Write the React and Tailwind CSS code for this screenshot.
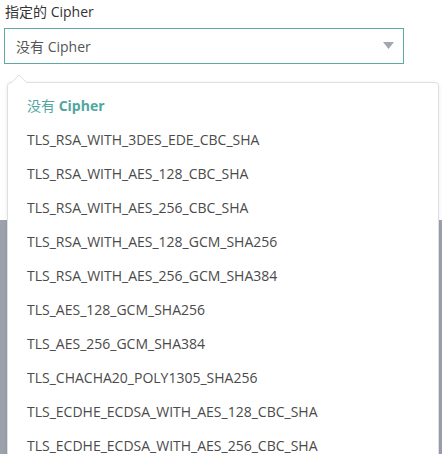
import React from 'react';

const CIPHERS = [
  'TLS_RSA_WITH_3DES_EDE_CBC_SHA',
  'TLS_RSA_WITH_AES_128_CBC_SHA',
  'TLS_RSA_WITH_AES_256_CBC_SHA',
  'TLS_RSA_WITH_AES_128_GCM_SHA256',
  'TLS_RSA_WITH_AES_256_GCM_SHA384',
  'TLS_AES_128_GCM_SHA256',
  'TLS_AES_256_GCM_SHA384',
  'TLS_CHACHA20_POLY1305_SHA256',
  'TLS_ECDHE_ECDSA_WITH_AES_128_CBC_SHA',
  'TLS_ECDHE_ECDSA_WITH_AES_256_CBC_SHA',
];

const App = () => {
  return (
    <div className="relative h-[454px] w-[442px] overflow-hidden font-['Open_Sans','Noto_Sans_CJK_SC',sans-serif] text-[14px]">
      <div className="h-[220px] bg-white px-[4px] pt-[2px]">
        <label className="block pl-[1px] text-[14px] leading-[20px] text-[#333]">指定的 Cipher</label>
        <div className="mt-[6px] flex h-[36px] w-[400px] items-center justify-between border border-[#5fa8a3] pl-[11px] pr-[9px] text-[14px] text-[#555]">
          <span>没有 Cipher</span>
          <svg width="11" height="8" viewBox="0 0 11 8">
            <path d="M0 0 H11 L5.5 7 Z" fill="#a3a7b2" />
          </svg>
        </div>
      </div>
      <div className="h-[234px] bg-[#9ca1ac]" />

      <div className="absolute left-[7px] top-[82px] w-[432px] rounded-[4px] border border-[#dcdfe4] bg-white shadow-[0_1px_4px_rgba(0,0,0,0.08)]">
        <svg className="absolute left-[3px] top-[-13px]" width="16" height="13" viewBox="0 0 16 13">
          <path d="M0 13 L8 5 L16 13" fill="white" stroke="#dcdfe4" />
        </svg>
        <ul className="pt-[6px]">
          <li className="flex h-[33px] items-center pl-[19px] text-[#4fa6a0]">
            没有&nbsp;<span className="font-bold">Cipher</span>
          </li>
          {CIPHERS.map((c) => (
            <li key={c} className="flex h-[34px] items-center pl-[19px] text-[#4a4a4a]">{c}</li>
          ))}
        </ul>
      </div>
    </div>
  );
};

export default App;
